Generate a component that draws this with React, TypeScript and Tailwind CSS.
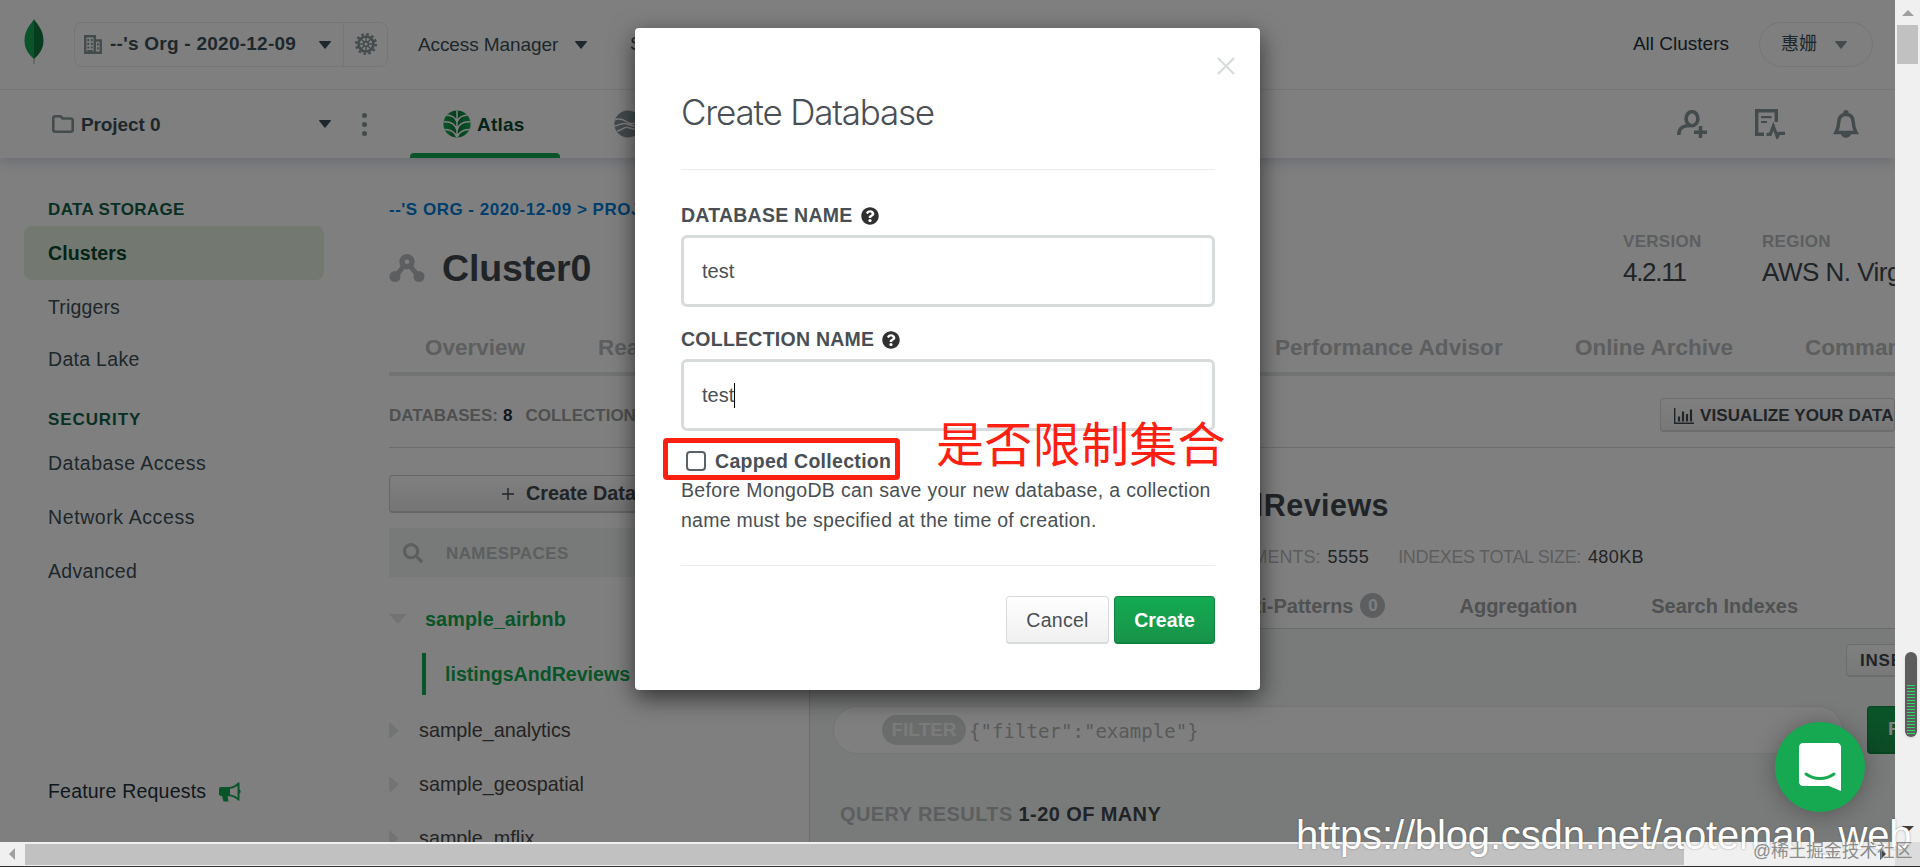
import React from 'react';
import { FaSearch, FaQuestionCircle } from 'react-icons/fa';

function Caret({ className }: { className?: string }) {
  return (
    <svg viewBox="0 0 12 8" className={`w-3 h-2 shrink-0 ${className || ''}`} fill="currentColor">
      <path d="M.6 0h10.8c.5 0 .7.5.4.9L6.5 7.6c-.3.4-.8.4-1 0L.2.9C-.1.5.1 0 .6 0z" />
    </svg>
  );
}

function MongoLeaf() {
  return (
    <svg viewBox="0 0 20 46" className="w-5 h-[46px] shrink-0">
      <path d="M9.3 38h1.4v7H9.3z" fill="#b8c4c2" />
      <path d="M10 0c.6 3 9.5 9 9.5 21.5C19.5 31 14 36.5 10 40z" fill="#0f7a3d" />
      <path d="M10 0C9.4 3 .5 9 .5 21.5.5 31 6 36.5 10 40z" fill="#13aa52" />
    </svg>
  );
}

function BuildingIcon() {
  return (
    <svg viewBox="0 0 18 19" className="w-[18px] h-[19px] shrink-0 text-[#89979b]">
      <path d="M1.25 1.25h9.5v16.5h-9.5zM10.75 5.5h6v12.25h-6z" fill="none" stroke="currentColor" strokeWidth="2.4" />
      <path
        d="M3.3 4h2v2.2h-2zM6.8 4h2v2.2h-2zM3.3 7.7h2v2.2h-2zM6.8 7.7h2v2.2h-2zM3.3 11.4h2v2.2h-2zM6.8 11.4h2v2.2h-2zM3.3 15h5.5v3H3.3zM12.9 8.2h1.9v2.2h-1.9zM12.9 12.3h1.9v2.2h-1.9z"
        fill="currentColor"
      />
    </svg>
  );
}

function GearIcon() {
  return (
    <svg viewBox="0 0 24 24" className="w-6 h-6 text-[#89979b]" fill="none" stroke="currentColor">
      <circle cx="12" cy="12" r="9.8" strokeWidth="2.4" strokeDasharray="2.6 2.53" />
      <circle cx="12" cy="12" r="7.5" strokeWidth="2.6" />
      <circle cx="12" cy="12" r="2.4" strokeWidth="1.6" />
      <path d="M12 4v5.5M12 14.5V20M4 12h5.500M14.5 12H20M6.3 6.3l3.9 3.9M13.8 13.8l3.9 3.9M17.7 6.3l-3.9 3.9M10.2 13.8l-3.9 3.9" strokeWidth="1.4" />
    </svg>
  );
}

function FolderIcon() {
  return (
    <svg viewBox="0 0 22 18" className="w-[22px] h-[18px] shrink-0 text-[#89979b]" fill="none" stroke="currentColor" strokeWidth="2.6">
      <path d="M1.3 3.3c0-1.2.8-2 2-2h4.6c1 0 1.4.4 2 1.2l.7 1h8.1c1.200 0 2 .8 2 2v9.2c0 1.2-.8 2-2 2H3.3c-1.2 0-2-.8-2-2z" />
    </svg>
  );
}

function AtlasIcon() {
  return (
    <svg viewBox="0 0 28 28" className="w-7 h-7 shrink-0">
      <defs>
        <clipPath id="atlas">
          <circle cx="14" cy="14" r="13.6" />
        </clipPath>
        <linearGradient id="atlasFill" x1="0" x2="1" y1="0" y2="0">
          <stop offset="0" stopColor="#13aa52" />
          <stop offset=".5" stopColor="#0b7a3c" />
          <stop offset="1" stopColor="#13aa52" />
        </linearGradient>
      </defs>
      <g clipPath="url(#atlas)">
        <rect width="28" height="28" fill="url(#atlasFill)" />
        <path
          d="M14 0v28M2 5c6 0 10.500 2 12 7 1.500-5 6-7 12-7M-1 12c8-.8 13.500 2 15 8.500 1.500-6.500 7-9.300 15-8.500M0 19.500c8-.5 12 2 14 8 2-6 6-8.500 14-8"
          fill="none"
          stroke="#fff"
          strokeWidth="1.5"
        />
      </g>
    </svg>
  );
}

function RealmIcon() {
  return (
    <svg viewBox="0 0 28 28" className="w-7 h-7 shrink-0">
      <defs>
        <clipPath id="realm">
          <circle cx="14" cy="14" r="13.6" />
        </clipPath>
      </defs>
      <g clipPath="url(#realm)">
        <rect width="28" height="28" fill="#89979b" />
        <path d="M0 10c5-2 9-1 13 2s9 1.500 14-2M0 16c5 0 8-4 13-2s10 3.500 15 1M3 21c4 0 7-5 11-3.500s9 3 14 1.500" fill="none" stroke="#fff" strokeWidth="1.5" />
      </g>
    </svg>
  );
}

function InviteIcon() {
  return (
    <svg viewBox="0 0 30 28" className="w-[30px] h-7 text-[#89979b]" fill="none" stroke="currentColor" strokeWidth="3.6">
      <ellipse cx="15" cy="8.7" rx="5.9" ry="7" />
      <path d="M1.8 25c0-6 3.5-9 8-9.300h3M17 22.200h13" />
      <path d="M23.500 16v12.500" />
    </svg>
  );
}

function ActivityIcon() {
  return (
    <svg viewBox="0 0 30 30" className="w-[30px] h-[30px] text-[#89979b]" fill="none" stroke="currentColor" strokeWidth="3.4">
      <path d="M9 25.300H1.700V1.700h19.600V13" />
      <path d="M6 8.200h10.500M6 13h6" strokeWidth="2.2" />
      <path d="M11.500 25.300h3.800l3-8 4 10.500 1.700-3.500h6" strokeWidth="3.2" />
    </svg>
  );
}

function BellIcon() {
  return (
    <svg viewBox="0 0 26 28" className="w-[26px] h-7 text-[#89979b]">
      <path d="M13 4.500c-5 0-7 3-7.200 7.500-.3 5-1 7.500-2.800 10.500h20c-1.800-3-2.500-5.500-2.800-10.500C20 7.500 18 4.500 13 4.500z" fill="none" stroke="currentColor" strokeWidth="3.5" />
      <path d="M13 0c1.700 0 2.700 1.200 2.700 3v1.500h-5.400V3c0-1.800 1-3 2.700-3zM8 23.500h10c0 2.500-2.200 4.300-5 4.300s-5-1.800-5-4.300z" fill="currentColor" />
    </svg>
  );
}

function MegaphoneIcon() {
  return (
    <svg viewBox="0 0 22 20" className="w-[22px] h-5" fill="#13aa52">
      <path fillRule="evenodd" d="M2 5h7.500C13 5 17 3 19 .5h1.500v7c1.500.5 1.500 3.500 0 4v7H19c-1.800-2-5-4-8.500-4.300L9 14c-.8 1.500.5 3 .3 5.500H4.500L3 14H2c-1.200 0-2-.8-2-2V7c0-1.200.8-2 2-2zm9 1.800v5.700c3 .4 5.500 1.500 7.500 3.200V3.800C16.500 5.400 14 6.500 11 6.800z" />
    </svg>
  );
}

function ClusterIcon() {
  return (
    <svg viewBox="0 0 36 28" className="w-9 h-7 text-[#babdbe]">
      <path d="M18 8L6 23M18 8l12 15" stroke="currentColor" strokeWidth="5" />
      <circle cx="6" cy="22.5" r="5.5" fill="currentColor" />
      <circle cx="30" cy="22.5" r="5.5" fill="currentColor" />
      <circle cx="18" cy="7.7" r="5" fill="#fff" stroke="currentColor" strokeWidth="5.4" />
    </svg>
  );
}

function ChartIcon() {
  return (
    <svg viewBox="0 0 20 16" className="w-5 h-4 shrink-0" fill="none" stroke="currentColor">
      <path d="M.7 0v15.300H20" strokeWidth="1.4" />
      <path d="M5 13.500V8.500M9 13.500V3.500M13 13.500V6M17 13.500V1.500" strokeWidth="2.2" />
    </svg>
  );
}

function TopBar() {
  return (
    <div className="relative z-10 h-[90px] shrink-0 border-b border-[#e7eeec] bg-white flex items-center pl-6 pr-[22px] pb-px text-[19px] text-[#3d4f58]">
      <div className="-mt-1"><MongoLeaf /></div>
      <div className="ml-[30px] w-[314px] h-[45px] border border-[#e7eeec] rounded-lg flex items-center font-bold">
        <div className="w-[269px] h-full border-r border-[#e7eeec] flex items-center pl-[9px] pr-3">
          <BuildingIcon />
          <span className="ml-2 pt-px flex-1 tracking-[0.25px]">--'s Org - 2020-12-09</span>
          <Caret className="mt-0.5" />
        </div>
        <div className="flex-1 flex justify-center">
          <GearIcon />
        </div>
      </div>
      <span className="ml-[30px] pt-0.5 tracking-[-0.1px]">Access Manager</span>
      <Caret className="ml-[17px] mt-0.5" />
      <span className="ml-[43px]">Support</span>
      <div className="flex-1" />
      <span className="text-[#21313c]">All Clusters</span>
      <div className="ml-[30px] w-[114px] h-[45px] border border-[#e7eeec] rounded-full flex items-center pl-[21px] pt-px text-[18px] font-['Liberation_Sans','Noto_Sans_CJK_SC',sans-serif]">
        惠姗
        <Caret className="ml-[18px] text-[#89979b]" />
      </div>
    </div>
  );
}

function ProjectBar() {
  return (
    <div className="relative h-[68px] shrink-0 bg-white flex items-center pl-[52px] pr-9 shadow-[0_3px_14px_rgba(60,90,130,0.25)] text-[19px] text-[#3d4f58]">
      <FolderIcon />
      <span className="ml-[7px] pt-0.5 w-[238px] font-bold tracking-[-0.1px]">Project 0</span>
      <Caret />
      <div className="ml-[31px] w-[5px] flex flex-col gap-1">
        <i className="size-[5px] rounded-full bg-[#89979b]" />
        <i className="size-[5px] rounded-full bg-[#89979b]" />
        <i className="size-[5px] rounded-full bg-[#89979b]" />
      </div>
      <div className="ml-[43px] w-[150px] h-full relative flex items-center pl-[33px] font-bold">
        <AtlasIcon />
        <span className="ml-1.5 pt-0.5 tracking-[0.2px] text-[#094732]">Atlas</span>
        <div className="absolute left-0 bottom-0 w-full h-[5px] rounded-t bg-[#13aa52]" />
      </div>
      <div className="ml-[54px] flex items-center">
        <RealmIcon />
        <span className="ml-2">Realm</span>
      </div>
      <div className="flex-1" />
      <div className="flex items-center gap-12">
        <InviteIcon />
        <ActivityIcon />
        <BellIcon />
      </div>
    </div>
  );
}

function Sidebar() {
  return (
    <div className="w-[324px] shrink-0 pl-6 pt-[34px] text-[19.5px] tracking-[0.3px] text-[#3d4f58]">
      <div className="h-[34px] pt-[5px] pl-6 text-[17px] leading-[26px] font-bold text-[#116149] tracking-[0.35px]">DATA STORAGE</div>
      <div className="h-[54px] pl-6 pt-px flex items-center rounded-lg bg-[#e6f2e1] font-bold text-[#094732] tracking-[0.1px]">Clusters</div>
      <div className="h-[54px] pl-6 pt-0.5 flex items-center tracking-[0.15px]">Triggers</div>
      <div className="h-[51px] pl-6 flex items-center">Data Lake</div>
      <div className="h-[51px] pl-6 pt-[22px] text-[17px] leading-[26px] font-bold text-[#116149] tracking-[0.9px]">SECURITY</div>
      <div className="h-[54px] pl-6 pt-0.5 flex items-center tracking-[0.5px]">Database Access</div>
      <div className="h-[54px] pl-6 pt-0.5 flex items-center tracking-[0.6px]">Network Access</div>
      <div className="h-[54px] pl-6 pt-0.5 flex items-center">Advanced</div>
      <div className="mt-[166px] h-[54px] pl-6 pt-0.5 flex items-center tracking-[0.2px] text-[#21313c]">
        Feature Requests
        <span className="ml-[13px]"><MegaphoneIcon /></span>
      </div>
    </div>
  );
}

function TreeItem({ name }: { name: string }) {
  return (
    <div className="h-[54px] flex items-center">
      <svg viewBox="0 0 10 18" className="w-2.5 h-[17px] text-[#e3e8e7]" fill="currentColor">
        <path d="M0 0l10 9-10 9z" />
      </svg>
      <span className="ml-5 pt-px">{name}</span>
    </div>
  );
}

function Namespaces() {
  return (
    <div className="w-[420px] shrink-0 pt-[27px] text-[19.8px] text-[#494747]">
      <div className="w-[400px] h-[38px] rounded border border-[#cbcfce] border-b-2 bg-linear-to-b from-white to-[#ebebeb] flex items-center pl-28 pt-px font-bold text-[#42494f]">
        <svg viewBox="0 0 12 12" className="size-3 mr-3" stroke="currentColor" strokeWidth="1.4">
          <path d="M6 0v12M0 6h12" />
        </svg>
        Create Database
      </div>
      <div className="mt-[15px] w-[400px] h-[49px] bg-[#f0f5f3] flex items-center pl-3.5 font-bold text-[17px] text-[#babdbe]">
        <FaSearch className="size-5" />
        <span className="ml-[23px] pt-0.5 tracking-[0.4px]">NAMESPACES</span>
      </div>
      <div className="mt-[15px] h-[54px] flex items-center font-bold text-[#13aa52]">
        <svg viewBox="0 0 18 10" className="w-[18px] h-2.5 text-[#e3e8e7]" fill="currentColor">
          <path d="M0 0h18L9 10z" />
        </svg>
        <span className="ml-[18px] pt-px tracking-[0.1px]">sample_airbnb</span>
      </div>
      <div className="ml-[33px] mt-[7px] mb-2 h-[42px] border-l-4 border-[#13aa52] flex items-center pl-[19px] pt-px font-bold text-[19.6px] text-[#13aa52]">
        listingsAndReviews
      </div>
      <TreeItem name="sample_analytics" />
      <TreeItem name="sample_geospatial" />
      <TreeItem name="sample_mflix" />
    </div>
  );
}

function CollectionPanel() {
  return (
    <div className="flex-1 min-w-0 border-l border-[#d6dbda] flex flex-col whitespace-nowrap">
      <div className="mt-[38px] h-10 w-[579px] flex items-center justify-end text-[30.5px] tracking-[0.45px] font-bold text-[#42494f]">sample_airbnb.listingsAndReviews</div>
      <div className="mt-[11px] h-10 w-[834px] flex items-center justify-end text-[18px] text-[#babdbe]">
        TOTAL DOCUMENTS:<span className="ml-[7px] tracking-[0.4px] text-[#42494f]">5555</span>
        <span className="ml-[29px] tracking-[-0.35px]">INDEXES TOTAL SIZE:</span>
        <span className="ml-[7px] tracking-[0.4px] text-[#42494f]">480KB</span>
      </div>
      <div className="h-[51px] pt-1.5 w-[988px] flex items-center justify-end text-[20px] font-bold text-[#a0a3a4]">
        Schema Anti-Patterns
        <span className="ml-[7px] size-[25px] rounded-full bg-[#babdbe] text-white flex items-center justify-center text-[17px]">0</span>
        <span className="ml-[74px]">Aggregation</span>
        <span className="ml-[74px]">Search Indexes</span>
      </div>
      <div className="flex-1 border-t border-[#d6dbda] bg-[#f2f6f4] pt-[15px]">
        <div className="ml-[1036px] w-[200px] h-[33px] rounded border border-[#d6dbda] border-b-2 bg-linear-to-b from-white to-[#f2f2f2] flex items-center pl-[13px] pt-px text-[17px] font-bold text-[#42494f] tracking-[0.8px]">
          INSERT DOCUMENT
        </div>
        <div className="mt-[29px] ml-[23px] flex">
          <div className="w-[1010px] h-12 shrink-0 rounded-full border border-[#e6eae8] bg-white flex items-center pl-12">
            <span className="w-[84px] h-[30px] rounded-full bg-[#d6d8d8] text-[#f5f6f5] font-bold text-[19px] flex items-center justify-center">FILTER</span>
            <span className="ml-[3px] pt-0.5 tracking-[0.05px] font-['DejaVu_Sans_Mono',monospace] text-[19px] text-[#b0b4b4]">{'{"filter":"example"}'}</span>
          </div>
          <div className="ml-6 w-24 h-12 shrink-0 rounded border border-[#0c8a40] border-b-2 bg-linear-to-b from-[#13aa52] to-[#18964c] text-white font-bold text-[19px] flex items-center pl-5">FIND</div>
        </div>
        <div className="mt-[46px] ml-[30px] text-[20px] leading-7 font-bold text-[#babdbe] tracking-[0.4px]">
          QUERY RESULTS <span className="text-[#42494f]">1-20 OF MANY</span>
        </div>
      </div>
    </div>
  );
}

function Cluster() {
  return (
    <div className="flex-1 min-w-0 pl-[65px] flex flex-col whitespace-nowrap">
      <div className="h-[104px] mt-[38px] flex justify-between">
        <div>
          <div className="h-7 flex items-center text-[17px] font-bold text-[#007cd9] tracking-[0.5px]">--'S ORG - 2020-12-09 &gt; PROJECT 0 &gt; CLUSTERS</div>
          <div className="mt-[20px] h-12 flex items-center">
            <ClusterIcon />
            <span className="ml-[17px] text-[37.5px] tracking-[-0.1px] font-bold text-[#42494f]">Cluster0</span>
          </div>
        </div>
        <div className="flex w-[272px] shrink-0 pt-8">
          <div className="w-[139px] shrink-0">
            <div className="h-7 text-[17px] tracking-[0.3px] flex items-center font-bold text-[#babdbe]">VERSION</div>
            <div className="h-8 text-[26px] tracking-[-1.3px] flex items-center text-[#42494f]">4.2.11</div>
          </div>
          <div>
            <div className="h-7 text-[17px] tracking-[0.3px] flex items-center font-bold text-[#babdbe]">REGION</div>
            <div className="h-8 text-[26px] tracking-[-0.5px] flex items-center text-[#42494f]">AWS N. Virginia</div>
          </div>
        </div>
      </div>
      <div className="mt-[23px] h-[53px] border-b-4 border-[#e3e8e7] flex items-center pl-9 pt-px text-[22.5px] font-bold text-[#babdbe]">
        <span className="w-[173px] shrink-0">Overview</span>
        <span className="w-[677px] shrink-0">Real Time</span>
        <span className="w-[300px] shrink-0 tracking-[0.05px]">Performance Advisor</span>
        <span className="w-[230px] shrink-0">Online Archive</span>
        <span>Command Line Tools</span>
      </div>
      <div className="h-[72px] pt-[7px] border-b border-[#d6dbda] flex items-center text-[17px] font-bold text-[#9c9fa0]">
        <span className="pt-0.5">DATABASES:</span>
        <span className="ml-[5px] pt-0.5 text-[#21313c]">8</span>
        <span className="ml-[13px] pt-0.5 flex-1">COLLECTIONS: 21</span>
        <div className="w-[235px] h-[34px] shrink-0 rounded border border-[#d6dbda] border-b-2 bg-linear-to-b from-white to-[#f0f0f0] flex items-center pl-[13px] pt-0.5 text-[#42494f]">
          <ChartIcon />
          <span className="ml-1.5 tracking-[0.1px]">VISUALIZE YOUR DATA</span>
        </div>
      </div>
      <div className="flex-1 flex min-h-0">
        <Namespaces />
        <CollectionPanel />
      </div>
    </div>
  );
}

function Field({ label, value, focused }: { label: string; value: string; focused?: boolean }) {
  return (
    <div className="h-[124px]">
      <div className="h-[38px] pb-px flex items-center font-bold text-[19.5px] tracking-[0.25px]">
        {label}
        <FaQuestionCircle className="ml-2 size-[18px] text-[#313030]" />
      </div>
      <div className="h-[72px] rounded-md border-3 border-[#d7dbdb] flex items-center pl-[18px] text-[20px]">
        {value}
        {focused && <i className="w-px h-[25px] bg-black" />}
      </div>
    </div>
  );
}

function CreateDatabaseModal() {
  return (
    <div className="absolute left-[635px] top-[28px] w-[625px] h-[662px] rounded bg-white pl-[46px] pr-[45px] text-[#494f54] shadow-[0_8px_24px_rgba(0,0,0,0.6)]">
      <div className="h-[142px] border-b border-[#ebebed] flex items-center pt-7 font-['Inter','Liberation_Sans',sans-serif] font-light text-[35px] tracking-[-1.2px]">Create Database</div>
      <svg viewBox="0 0 18 18" className="absolute right-[25px] top-[29px] size-[18px]" stroke="#d7dbdb" strokeWidth="2.2">
        <path d="M1 1l16 16M17 1L1 17" />
      </svg>
      <div className="pt-[27px]">
        <Field label="DATABASE NAME" value="test" />
        <Field label="COLLECTION NAME" value="test" focused />
      </div>
      <div className="h-[30px] pt-px flex items-center pl-[5px] font-bold text-[19.5px]">
        <i className="size-5 rounded-[4px] border-[2.5px] border-[#5b6266]" />
        <span className="ml-[9px] pt-[3px] tracking-[0.3px]">Capped Collection</span>
      </div>
      <div className="h-[91px] border-b border-[#ebebed] text-[19.5px] leading-[30px] tracking-[0.33px]">
        Before MongoDB can save your new database, a collection
        <br />
        <span className="tracking-[0.24px]">name must be specified at the time of creation.</span>
      </div>
      <div className="pt-[30px] flex justify-end gap-[5px] text-[19.5px]">
        <button className="w-[103px] h-12 pt-[3px] rounded border border-[#d7dbdb] border-b-2 bg-linear-to-b from-white to-[#f0f0f0] tracking-[0.3px]">Cancel</button>
        <button className="w-[101px] h-12 pt-[3px] rounded border border-[#0f8440] border-b-2 bg-linear-to-b from-[#13aa52] to-[#189349] text-white font-bold">Create</button>
      </div>
    </div>
  );
}

function ChatBubble() {
  return (
    <div className="absolute left-[1775px] top-[722px] size-[90px] rounded-full bg-[#17a951] shadow-[0_2px_24px_rgba(0,0,0,0.3)] flex items-center justify-center">
      <svg viewBox="0 0 42 48" className="w-[42px] h-12">
        <path d="M4 0h34c2.200 0 4 1.800 4 4v44l-12-5H4c-2.200 0-4-1.800-4-4V4c0-2.200 1.800-4 4-4z" fill="#fff" />
        <path d="M7 31c8 6 20 6 28 0" fill="none" stroke="#17a951" strokeWidth="3" strokeLinecap="round" />
      </svg>
    </div>
  );
}

export default function App() {
  return (
    <div className="relative w-[1920px] h-[867px] overflow-hidden bg-white flex flex-col font-['Liberation_Sans',sans-serif]">
      <div className="flex h-[842px] shrink-0">
        <div className="relative w-[1895px] h-[842px] overflow-hidden flex flex-col">
          <TopBar />
          <ProjectBar />
          <div className="flex-1 min-h-0 flex">
            <Sidebar />
            <Cluster />
          </div>
          <div className="absolute inset-0 z-10 bg-black/50" />
          <div className="absolute inset-0 z-20">
            <CreateDatabaseModal />
            <ChatBubble />
          </div>
        </div>
        <div className="w-[25px] bg-[#f0f0f0] flex flex-col items-center pt-2.5">
          <svg viewBox="0 0 12 6" className="w-3 h-1.5 shrink-0" fill="#a0a0a0"><path d="M6 0l6 6H0z" /></svg>
          <div className="mt-[9px] w-[21px] h-[39px] shrink-0 bg-[#c1c1c1]" />
          <div className="mt-[588px] ml-1.5 w-3 h-[85px] shrink-0 rounded-full bg-[#5c5c5c] pt-[33px] px-0.5 flex flex-col gap-0.5 shadow">
            {Array.from({ length: 17 }, (_, i) => (
              <i key={i} className="h-px shrink-0 bg-[#2fd968]" />
            ))}
          </div>
          <svg viewBox="0 0 12 6" className="mt-[89px] w-3 h-1.5 shrink-0" fill="#404040"><path d="M0 0h12L6 6z" /></svg>
        </div>
      </div>
      <div className="h-6 shrink-0 bg-[#f0f0f0] flex items-center">
        <svg viewBox="0 0 6 12" className="ml-[9px] w-1.5 h-3" fill="#a0a0a0"><path d="M6 0v12L0 6z" /></svg>
        <div className="ml-2.5 w-[1659px] h-[21px] bg-[#c1c1c1]" />
        <svg viewBox="0 0 6 12" className="ml-[196px] w-1.5 h-3" fill="#404040"><path d="M0 0l6 6-6 6z" /></svg>
        <div className="ml-auto w-[25px] h-6 bg-[#dcdcdc]" />
      </div>
      <div className="h-px bg-[#2e2e2e]" />

      {/* annotations drawn over the page */}
      <div className="absolute z-30 left-[663px] top-[438px] w-[237px] h-[42px] rounded border-5 border-[#ff2012]" />
      <div className="absolute z-30 left-[936px] top-[405px] text-[48px] leading-[72px] tracking-[0.3px] whitespace-nowrap text-[#ff2012] font-['Noto_Sans_CJK_SC',sans-serif]">是否限制集合</div>
      <div className="absolute z-30 left-[1296px] top-[810px] text-[40px] leading-[50px] tracking-[-0.15px] whitespace-nowrap text-white [text-shadow:0_0_2px_rgba(0,0,0,0.4)]">https://blog.csdn.net/aoteman_web</div>
      <div className="absolute z-30 left-[1753px] top-[838px] text-[17.7px] leading-[26px] whitespace-nowrap text-[#8c8c8c] font-['Liberation_Sans','Noto_Sans_CJK_SC',sans-serif]">@稀土掘金技术社区</div>
    </div>
  );
}
